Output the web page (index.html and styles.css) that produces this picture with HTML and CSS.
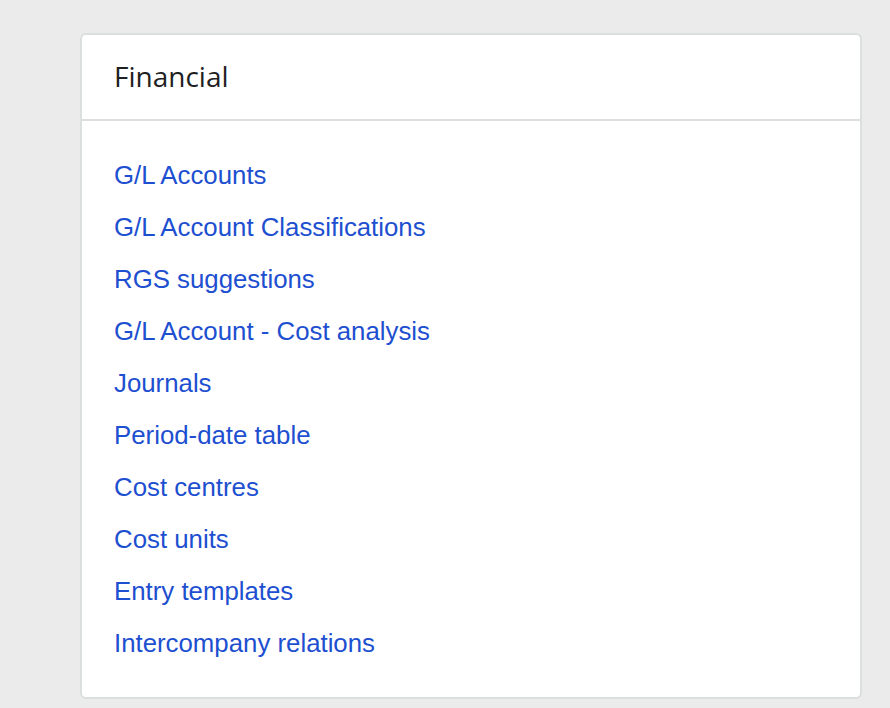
FILE: index.html
```html
<!DOCTYPE html>
<html lang="en">
<head>
<meta charset="utf-8">
<link rel="stylesheet" href="styles.css">
</head>
<body>
<main class="page">
  <section class="card">
    <header class="card-header">
      <h2 class="card-title">Financial</h2>
    </header>
    <ul class="link-list">
      <li><a href="#">G/L Accounts</a></li>
      <li><a href="#">G/L Account Classifications</a></li>
      <li><a href="#">RGS suggestions</a></li>
      <li><a href="#">G/L Account - Cost analysis</a></li>
      <li><a href="#">Journals</a></li>
      <li><a href="#">Period-date table</a></li>
      <li><a href="#">Cost centres</a></li>
      <li><a href="#">Cost units</a></li>
      <li><a href="#">Entry templates</a></li>
      <li><a href="#">Intercompany relations</a></li>
    </ul>
  </section>
</main>
</body>
</html>
```
FILE: styles.css
```css
html, body {
  margin: 0;
  padding: 0;
  background: #ebebeb;
}
.page {
  padding: 33px 0 0 80px;
}
.card {
  width: 782px;
  box-sizing: border-box;
  background: #ffffff;
  border: 2px solid #dcdfdf;
  border-radius: 6px;
}
.card-header {
  height: 86px;
  box-sizing: border-box;
  border-bottom: 2px solid #dcdfdf;
  display: flex;
  align-items: center;
  padding: 0 0 3px 32px;
}
.card-title {
  margin: 0;
  font-family: "Open Sans", Lato, sans-serif;
  font-weight: 500;
  font-size: 28px;
  color: #1f1f1f;
}
.link-list {
  list-style: none;
  margin: 0;
  padding: 28px 0 28px 32px;
  font-family: "Liberation Sans", Arial, sans-serif;
  font-size: 25.8px;
  line-height: 52px;
}
.link-list a {
  color: #1d4fd0;
  text-decoration: none;
}
```
